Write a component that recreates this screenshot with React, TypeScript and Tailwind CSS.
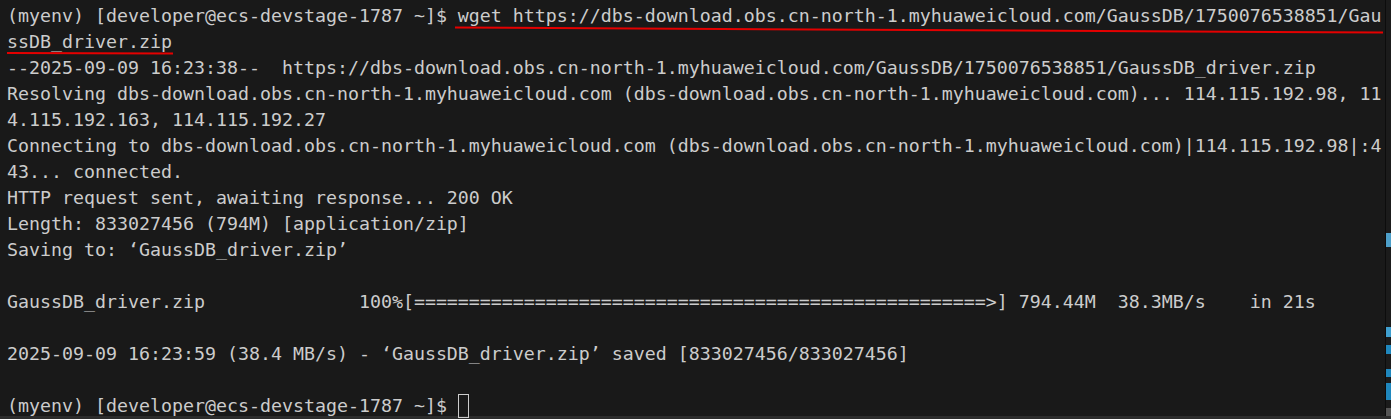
const lines: string[] = [
  "(myenv) [developer@ecs-devstage-1787 ~]$ wget https://dbs-download.obs.cn-north-1.myhuaweicloud.com/GaussDB/1750076538851/Gau",
  "ssDB_driver.zip",
  "--2025-09-09 16:23:38--  https://dbs-download.obs.cn-north-1.myhuaweicloud.com/GaussDB/1750076538851/GaussDB_driver.zip",
  "Resolving dbs-download.obs.cn-north-1.myhuaweicloud.com (dbs-download.obs.cn-north-1.myhuaweicloud.com)... 114.115.192.98, 11",
  "4.115.192.163, 114.115.192.27",
  "Connecting to dbs-download.obs.cn-north-1.myhuaweicloud.com (dbs-download.obs.cn-north-1.myhuaweicloud.com)|114.115.192.98|:4",
  "43... connected.",
  "HTTP request sent, awaiting response... 200 OK",
  "Length: 833027456 (794M) [application/zip]",
  "Saving to: \u2018GaussDB_driver.zip\u2019",
  "",
  "GaussDB_driver.zip              100%[" + "=".repeat(52) + ">] 794.44M  38.3MB/s    in 21s",
  "",
  "2025-09-09 16:23:59 (38.4 MB/s) - \u2018GaussDB_driver.zip\u2019 saved [833027456/833027456]",
  "",
];

const markers = [
  { top: 233, h: 14, c: "#4d9fc9" },
  { top: 327, h: 10, c: "#3f9fcf" },
  { top: 345, h: 9, c: "#1f87bd" },
  { top: 369, h: 8, c: "#1f87bd" },
  { top: 383, h: 17, c: "#1f87bd" },
  { top: 408, h: 8, c: "#555555" },
];

const App: React.FC = () => {
  return (
    <div className="w-[1391px] h-[419px] bg-[#191919] flex flex-col overflow-hidden">
      <div className="flex flex-1 min-h-0">
        <div
          className="relative flex-1 pl-[7px] pt-[3px] text-[#cccccc] text-[18.27px] leading-[26px] whitespace-pre"
          style={{ fontFamily: '"DejaVu Sans Mono", "Liberation Mono", monospace' }}
        >
          {lines.map((l, i) => (
            <div key={i} className="h-[26px]">
              {l}
            </div>
          ))}
          <div className="h-[26px] flex items-center">
            <span>(myenv) [developer@ecs-devstage-1787 ~]$ </span>
            <span className="inline-block w-[11px] h-[24px] border border-[#cccccc]" />
          </div>

          {/* red annotation underlines */}
          <svg className="absolute left-0 top-0 pointer-events-none" width="1385" height="60">
            <path d="M455 27.5 L1383 32.5" stroke="#e40000" strokeWidth="2" fill="none" />
            <path d="M7 53 L173 53.5" stroke="#e40000" strokeWidth="2" fill="none" />
          </svg>
        </div>
        <div className="relative w-[6px] border-l border-[#0c0c0c] bg-[#1b1b1b]">
          {markers.map((m, i) => (
            <div
              key={i}
              className="absolute left-0 right-0"
              style={{ top: m.top, height: m.h, backgroundColor: m.c }}
            />
          ))}
        </div>
      </div>
      <div className="h-[3px] bg-[#2c2c2c]" />
    </div>
  );
};

export default App;
